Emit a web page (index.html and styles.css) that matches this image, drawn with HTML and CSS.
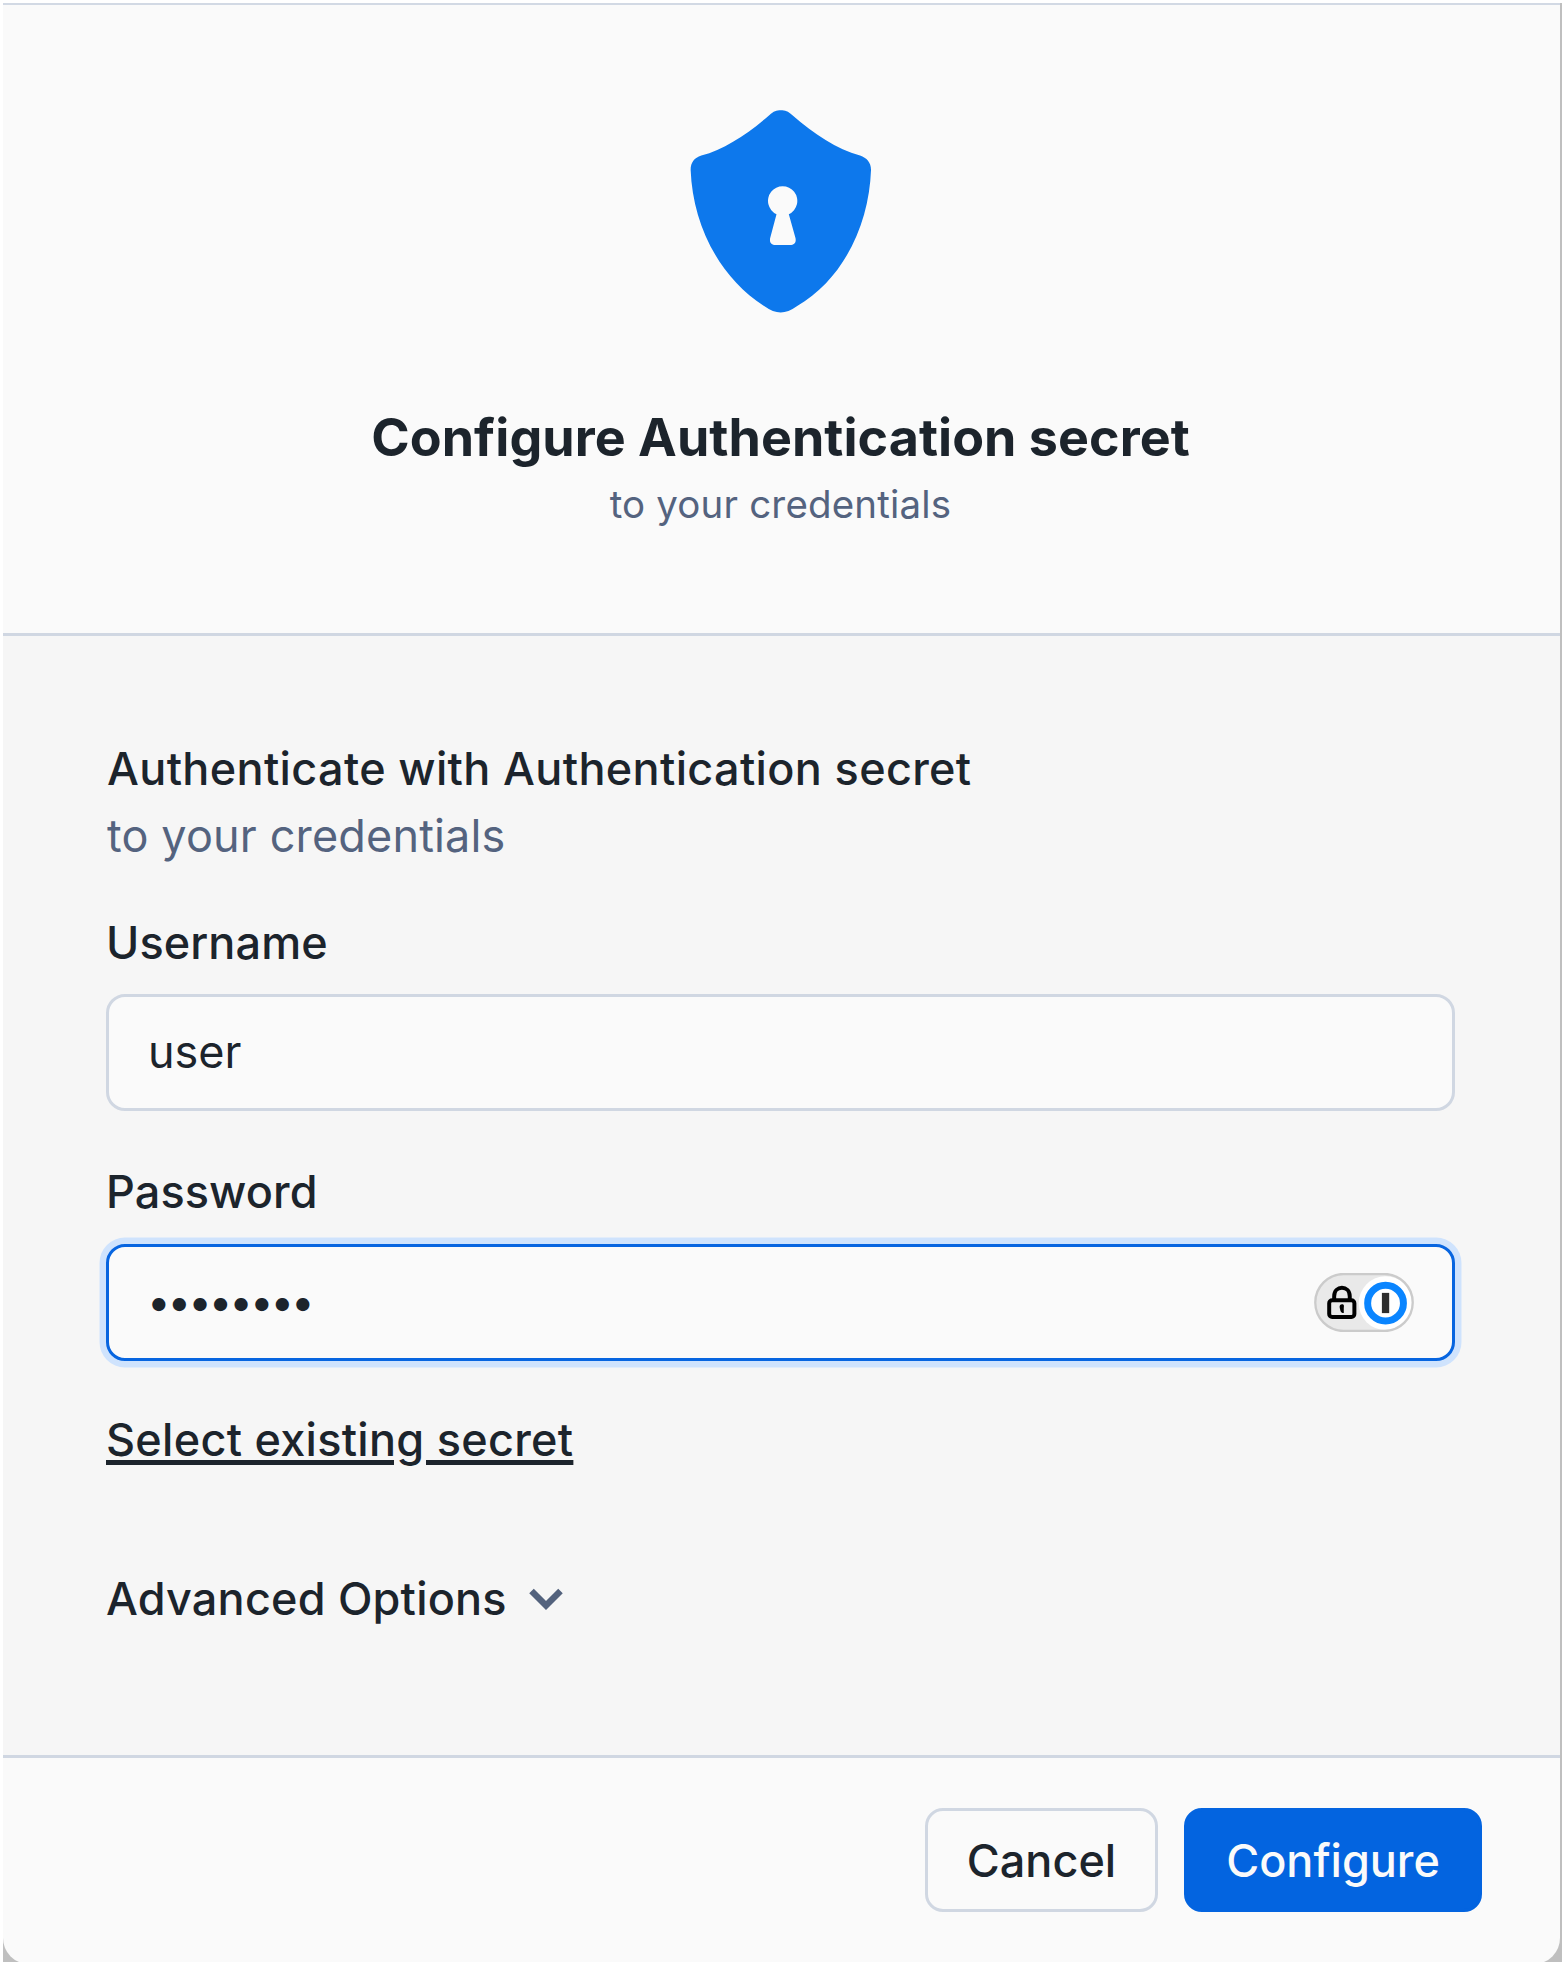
FILE: index.html
```html
<!DOCTYPE html>
<html lang="en">
<head>
<meta charset="utf-8">
<title>Configure Authentication secret</title>
<link rel="stylesheet" href="styles.css">
</head>
<body>
<div class="backdrop">
  <main class="modal">
    <header class="modal-header">
      <svg class="shield" viewBox="60 58 545 610" aria-hidden="true">
        <path fill="#0d78ec" fill-rule="evenodd" d="M332 59C345 59 354 62 366 73C432 130 500 176 570 195C590 202 603 216 603 238C597 400 522 565 380 648C345 673 318 673 283 648C145 560 67 400 61 238C61 216 72 202 93 195C163 176 232 130 298 73C310 62 319 59 332 59ZM319 371L300 443C297 456 304 464 316 464H360C372 464 379 456 376 443L356 371A44 44 0 1 0 319 371Z"/>
      </svg>
      <h1 class="title">Configure Authentication secret</h1>
      <p class="subtitle">to your credentials</p>
    </header>

    <section class="modal-body">
      <h2 class="heading">Authenticate with Authentication secret</h2>
      <p class="hint">to your credentials</p>

      <div class="field">
        <label class="label">Username</label>
        <div class="input"><span class="value">user</span></div>
      </div>

      <div class="field">
        <label class="label">Password</label>
        <div class="input input-focused">
          <span class="dots">••••••••</span>
          <svg class="badge" viewBox="102 158 300 178" aria-hidden="true">
            <rect x="105" y="161" width="294" height="172" rx="86" fill="#e9e9e9"/>
            <circle cx="317" cy="249" r="81" fill="#fff"/>
            <rect x="105" y="161" width="294" height="172" rx="86" fill="none" stroke="#cbcbcb" stroke-width="7"/>
            <path d="M162 240V228C162 194 209 194 209 228V240" fill="none" stroke="#000" stroke-width="12"/>
            <rect x="147" y="240" width="76" height="51" rx="9" fill="none" stroke="#000" stroke-width="12"/>
            <path d="M186 252C194 252 191 260 191 265V279C180 278 181 270 179 264C177 257 180 252 186 252Z" fill="#000"/>
            <circle cx="317" cy="249" r="54" fill="#fff" stroke="#0a85ff" stroke-width="21"/>
            <rect x="306" y="218" width="22" height="61" fill="#2e2e2e"/>
          </svg>
        </div>
      </div>

      <a class="link">Select existing secret</a>

      <div class="advanced">
        <span>Advanced Options</span>
        <svg class="chevron" viewBox="0 0 34 22" aria-hidden="true">
          <path d="M2.5 3L17 17.5L31.5 3" fill="none" stroke="#53627d" stroke-width="6.4"/>
        </svg>
      </div>
    </section>

    <footer class="modal-footer">
      <button class="button button-secondary">Cancel</button>
      <button class="button button-primary">Configure</button>
    </footer>
  </main>
</div>
</body>
</html>
```
FILE: styles.css
```css
* {
  box-sizing: border-box;
}

body {
  margin: 0;
  background: #fff;
  color: #1c242c;
  font-family: Inter, "Liberation Sans", sans-serif;
  font-size: 45px;
  font-weight: 500;
  line-height: 67px;
}

h1, h2, p {
  margin: 0;
}

.backdrop {
  height: 1962px;
  margin-left: 3px;
  padding: 3px 2px 0 0;
  overflow: hidden;
  background: linear-gradient(#fff 3px, #bfbfbf 3px);
}

.modal {
  display: flex;
  flex-direction: column;
  height: 1961px;
  overflow: hidden;
  border-top: 2px solid #d2d9e4;
  border-radius: 0 0 26px 26px;
  background: #fafafa;
}

.modal-header {
  display: flex;
  flex-direction: column;
  align-items: center;
  height: 631px;
  padding: 105px 2px 0 0;
  border-bottom: 3px solid #d0d7e2;
}

.shield {
  width: 182px;
  height: 203px;
  margin-bottom: 92px;
}

.title {
  font-size: 52px;
  font-weight: 700;
  line-height: 66px;
  letter-spacing: 0.04px;
}

.subtitle {
  margin-top: 3px;
  color: #54637f;
  font-size: 38.5px;
  font-weight: 400;
  line-height: 60px;
  letter-spacing: 0.17px;
}

.modal-body {
  display: flex;
  flex-direction: column;
  align-items: flex-start;
  height: 1122px;
  padding: 99px 105px 0 103px;
  border-bottom: 3px solid #d0d7e2;
  background: #f6f6f6;
}

.heading {
  padding-left: 1px;
  font-size: 45px;
  font-weight: 500;
  letter-spacing: 0.34px;
}

.hint {
  margin-bottom: 40px;
  padding-left: 1px;
  color: #54637f;
  font-weight: 400;
  letter-spacing: 0.15px;
}

.field {
  display: flex;
  flex-direction: column;
  gap: 18px;
  align-self: stretch;
  margin-bottom: 47px;
}

.field + .field {
  gap: 19px;
}

.label {
  letter-spacing: 0.1px;
}

.input {
  display: flex;
  align-items: center;
  justify-content: space-between;
  height: 117px;
  padding: 0 38px 0 39px;
  border: 3px solid #d0d7e2;
  border-radius: 19px;
  background: #fafafa;
  font-weight: 400;
}

.value {
  padding-bottom: 2px;
}

.input-focused {
  padding-left: 38px;
  border-color: #0765e0;
  box-shadow: 0 0 0 6.5px #cfe3fd;
}

.dots {
  padding-bottom: 2px;
  font-size: 42px;
  letter-spacing: -3.05px;
}

.badge {
  width: 100px;
  height: 59px;
}

.link {
  margin-top: -2px;
  letter-spacing: 0.28px;
  text-decoration: underline;
  text-decoration-thickness: 4.5px;
  text-underline-offset: 4px;
}

.advanced {
  display: flex;
  align-items: center;
  gap: 22px;
  margin-top: 92px;
  letter-spacing: 0.2px;
}

.chevron {
  width: 34px;
  height: 22px;
}

.modal-footer {
  display: flex;
  justify-content: flex-end;
  gap: 26px;
  padding: 50px 78px 0 0;
}

.button {
  height: 104px;
  padding: 0;
  border: 3px solid #d0d7e2;
  border-radius: 18px;
  background: #fafafa;
  color: inherit;
  font: inherit;
}

.button-secondary {
  width: 233px;
}

.button-primary {
  width: 298px;
  border-color: #0364e0;
  background: #0364e0;
  color: #fafafa;
}
```
